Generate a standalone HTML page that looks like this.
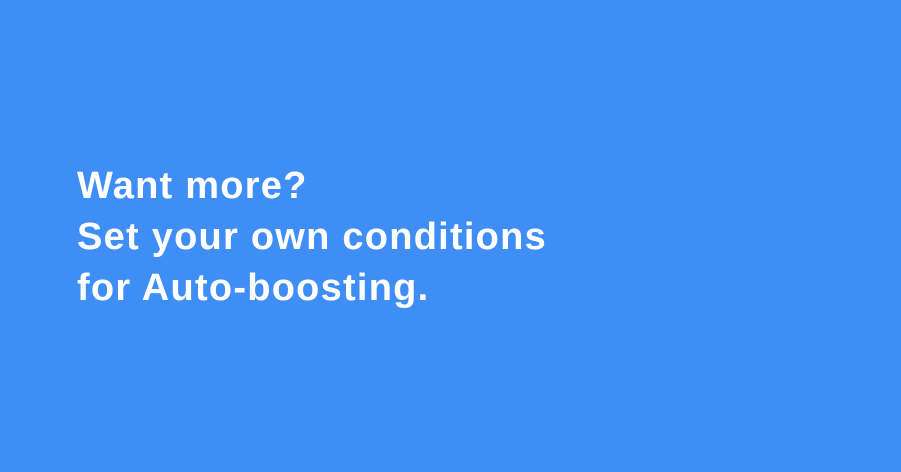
<!DOCTYPE html>
<html><head><meta charset="utf-8"><style>
html,body{margin:0;padding:0;}
body{width:901px;height:472px;background:#3f8ef6;position:relative;overflow:hidden;}
.t{position:absolute;left:77px;top:161px;color:#fff;font-family:"Liberation Sans",sans-serif;font-weight:bold;font-size:38px;line-height:51px;letter-spacing:1.25px;white-space:nowrap;}
</style></head><body>
<div class="t">Want more?<br>Set your own conditions<br>for Auto-boosting.</div>
</body></html>
